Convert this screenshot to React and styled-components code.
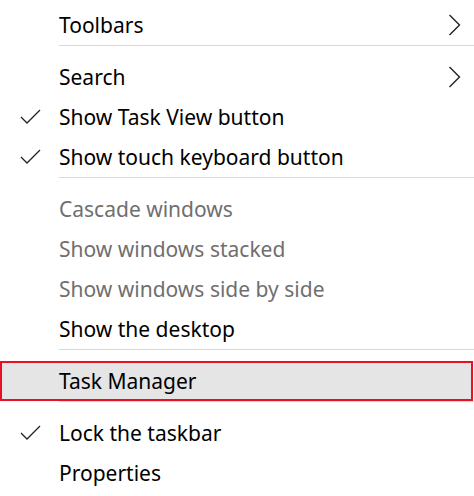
import React from "react";
import styled, { createGlobalStyle } from "styled-components";

const GlobalStyle = createGlobalStyle`
    html, body {
        margin: 0;
        padding: 0;
        background: #fff;
    }
    body {
        font-family: "Noto Sans", "Open Sans", "Liberation Sans", sans-serif;
    }
`;

const menuData = [
    { label: "Toolbars", submenu: true },
    { separator: true },
    { label: "Search", submenu: true },
    { label: "Show Task View button", checked: true },
    { label: "Show touch keyboard button", checked: true },
    { separator: true },
    { label: "Cascade windows", disabled: true },
    { label: "Show windows stacked", disabled: true },
    { label: "Show windows side by side", disabled: true },
    { label: "Show the desktop" },
    { separator: true },
    { label: "Task Manager", selected: true },
    { separator: true },
    { label: "Lock the taskbar", checked: true },
    { label: "Properties" },
];

const CheckIcon = () => (
    <svg width="21" height="15" viewBox="0 0 21 15" fill="none">
        <path d="M1 8 L7 14 L20 1" stroke="#222" strokeWidth="1.3" />
    </svg>
);

const ChevronIcon = () => (
    <svg width="13" height="22" viewBox="0 0 13 22" fill="none">
        <path d="M1.5 1 L11.5 11 L1.5 21" stroke="#222" strokeWidth="1.4" />
    </svg>
);

const App = () => {
    return (
        <>
            <GlobalStyle />
            <Menu>
                {menuData.map((item, index) =>
                    item.separator ? (
                        <Separator key={index} />
                    ) : (
                        <MenuItem key={index} $selected={item.selected} $disabled={item.disabled}>
                            <CheckSlot>{item.checked && <CheckIcon />}</CheckSlot>
                            <Label>{item.label}</Label>
                            <ArrowSlot>{item.submenu && <ChevronIcon />}</ArrowSlot>
                        </MenuItem>
                    )
                )}
            </Menu>
        </>
    );
};

const Menu = styled.div`
    width: 474px;
    height: 496px;
    padding-top: 5px;
    box-sizing: border-box;
    background: #fff;
    display: flex;
    flex-direction: column;
    overflow: hidden;
`;

const MenuItem = styled.div`
    display: flex;
    align-items: center;
    height: 40px;
    flex-shrink: 0;
    color: ${(p) => (p.$disabled ? "#6f6f6f" : "#000")};
    background: ${(p) => (p.$selected ? "#e5e5e5" : "transparent")};
    box-shadow: ${(p) => (p.$selected ? "inset 0 0 0 2px #e81123" : "none")};
    width: ${(p) => (p.$selected ? "473px" : "100%")};
`;

const CheckSlot = styled.div`
    width: 59px;
    flex-shrink: 0;
    display: flex;
    align-items: center;
    padding-left: 20px;
    box-sizing: border-box;
    margin-top: -2px;
`;

const Label = styled.div`
    flex: 1;
    font-size: 21px;
    line-height: 40px;
    white-space: nowrap;
`;

const ArrowSlot = styled.div`
    width: 26px;
    display: flex;
    align-items: center;
`;

const Separator = styled.div`
    height: 1px;
    margin: 0 0 11px 59px;
    background: #d9d9d9;
    flex-shrink: 0;
`;

export default App;
